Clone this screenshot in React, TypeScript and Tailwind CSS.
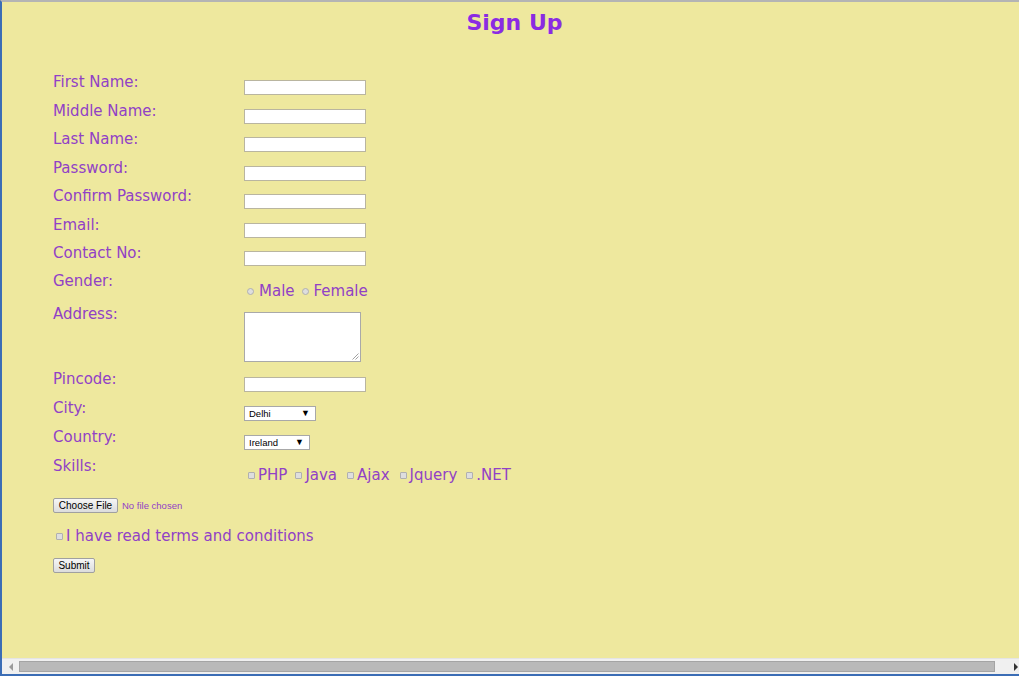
import React from "react";

const labelCls =
  "w-[191px] shrink-0 pt-[2px] text-[15px] leading-[18px] text-[#9141c6]";
const inputCls =
  "mt-[9px] block w-[122px] h-[15px] border border-[#b9b5a0] bg-white outline-none";

function Radio() {
  return (
    <span className="inline-block w-[7px] h-[7px] rounded-full border border-[#b0b0b0] bg-[#dedede]" />
  );
}

function Check() {
  return (
    <span className="inline-block w-[7px] h-[7px] rounded-[1px] border border-[#b0b0b0] bg-[#dedede]" />
  );
}

function Select({ text, w }: { text: string; w: "city" | "country" }) {
  return (
    <div
      className={
        (w === "city" ? "w-[72px]" : "w-[66px]") +
        " mt-[9px] h-[15px] border border-[#a8a8a8] bg-white flex items-center justify-between pl-[4px] pr-[5px] font-['Liberation_Sans',Arial,sans-serif] text-[9.5px] leading-[13px] text-black"
      }
    >
      <span>{text}</span>
      <span className="text-[9px]">▼</span>
    </div>
  );
}

export default function App() {
  return (
    <div className="w-[1019px] h-[676px] overflow-hidden flex flex-col border-l-2 border-l-[#3b6db5] border-t-2 border-t-[#b4b4b4] border-b-2 border-b-[#3b6db5] bg-[#eee89e] font-['DejaVu_Sans',Verdana,sans-serif]">
      <div className="flex-1 pl-[51px]">
        <h1 className="mt-[8px] pl-[8px] -ml-[51px] text-center text-[22px] leading-[26px] font-bold text-[#8A2BE2]">
          Sign Up
        </h1>
        <div className="mt-[35px] flex flex-col">
          <div className="flex h-[29px]">
            <div className={labelCls}>First Name:</div>
            <input type="text" className={inputCls} />
          </div>
          <div className="flex h-[28px]">
            <div className={labelCls}>Middle Name:</div>
            <input type="text" className={inputCls} />
          </div>
          <div className="flex h-[29px]">
            <div className={labelCls}>Last Name:</div>
            <input type="text" className={inputCls} />
          </div>
          <div className="flex h-[28px]">
            <div className={labelCls}>Password:</div>
            <input type="password" className={inputCls} />
          </div>
          <div className="flex h-[29px]">
            <div className={labelCls}>Confirm Password:</div>
            <input type="password" className={inputCls} />
          </div>
          <div className="flex h-[28px]">
            <div className={labelCls}>Email:</div>
            <input type="text" className={inputCls} />
          </div>
          <div className="flex h-[28px]">
            <div className={labelCls}>Contact No:</div>
            <input type="text" className={inputCls} />
          </div>
          <div className="flex h-[33px]">
            <div className={labelCls}>Gender:</div>
            <div className="mt-[12px] h-[18px] flex items-center text-[15px] leading-[18px] text-[#9141c6]">
              <span className="ml-[3px] flex">
                <Radio />
              </span>
              <span className="ml-[5px]">Male</span>
              <span className="ml-[7px] flex">
                <Radio />
              </span>
              <span className="ml-[5px]">Female</span>
            </div>
          </div>
          <div className="flex h-[65px]">
            <div className={labelCls}>Address:</div>
            <div className="relative mt-[9px] w-[117px] h-[50px] border border-[#a9a9a9] bg-white">
              <svg
                className="absolute right-[1px] bottom-[1px]"
                width="7"
                height="7"
                viewBox="0 0 7 7"
              >
                <line x1="6.5" y1="0.5" x2="0.5" y2="6.5" stroke="#8a8a8a" strokeWidth="0.8" />
                <line x1="6.5" y1="3.5" x2="3.5" y2="6.5" stroke="#8a8a8a" strokeWidth="0.8" />
              </svg>
            </div>
          </div>
          <div className="flex h-[29px]">
            <div className={labelCls}>Pincode:</div>
            <input type="text" className={inputCls} />
          </div>
          <div className="flex h-[29px]">
            <div className={labelCls}>City:</div>
            <Select text="Delhi" w="city" />
          </div>
          <div className="flex h-[29px]">
            <div className={labelCls}>Country:</div>
            <Select text="Ireland" w="country" />
          </div>
          <div className="flex h-[43px]">
            <div className={labelCls}>Skills:</div>
            <div className="mt-[11px] flex items-center h-[18px] text-[15px] leading-[18px] text-[#9141c6]">
              <span className="ml-[4px] flex">
                <Check />
              </span>
              <span className="ml-[3px]">PHP</span>
              <span className="ml-[8px] flex">
                <Check />
              </span>
              <span className="ml-[3px]">Java</span>
              <span className="ml-[10px] flex">
                <Check />
              </span>
              <span className="ml-[3px]">Ajax</span>
              <span className="ml-[10px] flex">
                <Check />
              </span>
              <span className="ml-[3px]">Jquery</span>
              <span className="ml-[9px] flex">
                <Check />
              </span>
              <span className="ml-[3px]">.NET</span>
            </div>
          </div>
          <div className="flex items-center h-[15px]">
            <button className="h-[15px] w-[65px] border border-[#a0a0a0] rounded-[2px] bg-gradient-to-b from-[#f6f6f6] to-[#dcdcdc] font-['Liberation_Sans',Arial,sans-serif] text-[10px] leading-[13px] text-black">
              Choose File
            </button>
            <span className="ml-[4px] font-['Liberation_Sans',Arial,sans-serif] text-[9.5px] leading-[13px] text-[#9141c6]">
              No file chosen
            </span>
          </div>
          <div className="mt-[14px] flex items-center h-[18px] text-[15px] leading-[18px] text-[#9141c6]">
            <span className="ml-[3px] flex">
              <Check />
            </span>
            <span className="ml-[3px]">I have read terms and conditions</span>
          </div>
          <div className="mt-[13px] flex">
            <button className="h-[15px] w-[42px] border border-[#a0a0a0] rounded-[2px] bg-gradient-to-b from-[#f6f6f6] to-[#dcdcdc] font-['Liberation_Sans',Arial,sans-serif] text-[10px] leading-[13px] text-black">
              Submit
            </button>
          </div>
        </div>
      </div>
      <div className="h-[16px] shrink-0 bg-[#f0f0f0] border-t border-t-[#e4e4e4] flex items-center">
        <svg className="ml-[7px]" width="5" height="8" viewBox="0 0 5 8">
          <path d="M4 0 L0 4 L4 8 Z" fill="#9a9a9a" />
        </svg>
        <div className="ml-[5px] w-[977px] h-[11px] bg-[#b9b9b9] border border-[#a4a4a4]" />
        <svg className="ml-[19px]" width="5" height="8" viewBox="0 0 5 8">
          <path d="M0 0 L4 4 L0 8 Z" fill="#333333" />
        </svg>
      </div>
    </div>
  );
}
